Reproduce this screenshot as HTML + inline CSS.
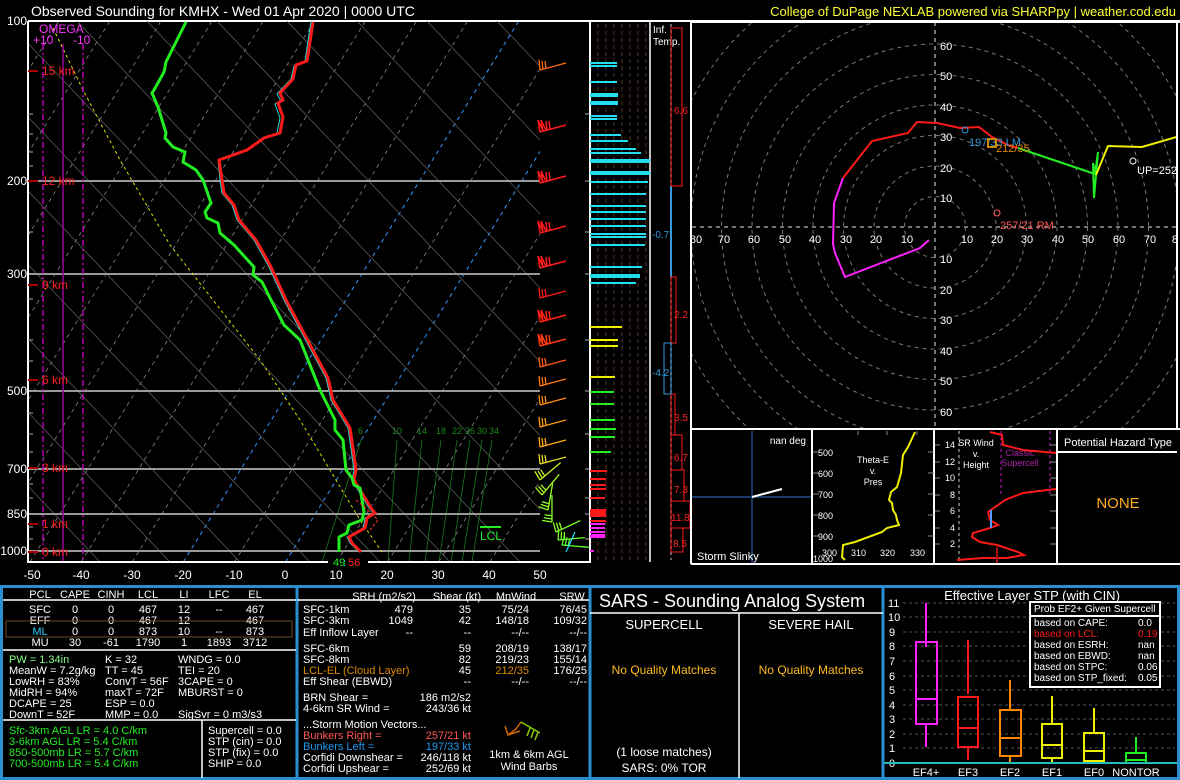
<!DOCTYPE html>
<html><head><meta charset="utf-8"><style>
html,body{margin:0;padding:0;background:#000;width:1180px;height:780px;overflow:hidden}
svg{display:block}
text{font-family:"Liberation Sans",sans-serif}
</style></head><body>
<svg width="1180" height="780" viewBox="0 0 1180 780" xmlns="http://www.w3.org/2000/svg">
<defs>
<clipPath id="sk"><rect x="28" y="21" width="512" height="541"/></clipPath>
<clipPath id="hd"><rect x="692" y="22" width="486" height="406"/></clipPath>
<g id="wb"><path d="M0 0 L26 -7 M0 0 L-2 -12 L3 -1 M3 -1 L1 -12 L6 -2 M7 -2 L6 -11 M10 -3 L9 -11" fill="none" stroke="currentColor" stroke-width="1.5"/></g>
<g id="wb2"><path d="M0 0 L26 -7 M0 0 L-1 -10 M3 -1 L2 -9 M6 -2 L5 -9" fill="none" stroke="currentColor" stroke-width="1.3"/></g>
</defs>
<rect width="1180" height="780" fill="#000"/>
<text x="31" y="16" fill="#fff" font-size="14">Observed Sounding for KMHX  -  Wed 01 Apr 2020 | 0000 UTC</text>
<text x="1176" y="16" fill="#ffff33" font-size="13" text-anchor="end">College of DuPage NEXLAB powered via SHARPpy | weather.cod.edu</text>
<line x1="28" y1="21" x2="1180" y2="21" stroke="#fff" stroke-width="2"/>

<g clip-path="url(#sk)">
<g stroke="#888" stroke-width="0.8" stroke-dasharray="4,4" fill="none">
<path d="M-276.6 562l335.4 -541M-225.5 562l335.4 -541M-174.4 562l335.4 -541M-123.3 562l335.4 -541M-72.2 562l335.4 -541M-21.1 562l335.4 -541M30 562l335.4 -541M81.1 562l335.4 -541M132.2 562l335.4 -541M234.4 562l335.4 -541M336.6 562l335.4 -541M387.7 562l335.4 -541M438.8 562l335.4 -541M489.9 562l335.4 -541M541 562l335.4 -541"/>
</g>
<path d="M183.3 562l335.4 -541M285.5 562l335.4 -541" stroke="#3399ff" stroke-width="1" stroke-dasharray="4,4" fill="none"/>
<g stroke="#666" stroke-width="0.7" fill="none">
<path d="M100 562 L-414 20M170 562 L-344 20M240 562 L-274 20M310 562 L-204 20M380 562 L-134 20M450 562 L-64 20M520 562 L6 20M590 562 L76 20M660 562 L146 20M730 562 L216 20M800 562 L286 20M870 562 L356 20M940 562 L426 20M1010 562 L496 20"/>
</g>
<g stroke="#1a7a1a" stroke-width="0.8" fill="none">
<path d="M322 562L361 440M388 562L397 440M409 562L422 440M425 562L441 440M439 562L457 440M451 562L470 440M462 562L482 440M472 562L492 440"/>
</g>
<g fill="#1a8a1a" font-size="9"><text x="358" y="434">6</text><text x="392" y="434">10</text><text x="417" y="434">14</text><text x="436" y="434">18</text><text x="452" y="434">22</text><text x="465" y="434">26</text><text x="477" y="434">30</text><text x="489" y="434">34</text></g>
<g stroke="#999" stroke-width="2"><path d="M28 181H540M28 274H540M28 391H540M28 469H540M28 514H540M28 551H540"/></g>
<polyline points="53,28 83,90 120,160 170,245 213,300 260,360 300,420 330,470 360,520 382,552" fill="none" stroke="#dddd00" stroke-width="1" stroke-dasharray="3,3"/>
<path d="M43 44V562M83 44V562" stroke="#bb00bb" stroke-width="1.5" stroke-dasharray="6,3,2,3"/>
<path d="M63 44V562" stroke="#990099" stroke-width="1.5"/>
<polyline points="311,21 305,61 294,66 291,79 277,94 281,101 275,104 280,118 277,133 261,139 245,151 218,160 220,180 222,193 232,205 237,220 254,240 269,267 284,300 326,378 331,400 348,428 354,470 352,480 358,490 369,508 373,513 365,518 363,528 347,537 350,543 359,552" fill="none" stroke="#22dddd" stroke-width="1"/>
<polyline points="313,22 307,61 296,65 293,79 280,93 283,100 278,103 283,117 280,133 264,138 247,150 219,160 222,180 224,193 234,205 239,220 256,240 271,267 286,300 328,378 333,400 350,428 356,470 354,480 360,490 371,508 375,513 367,518 365,528 349,537 352,543 361,552" fill="none" stroke="#ff1a1a" stroke-width="3"/>
<polyline points="186,22 177,40 166,62 164,72 154,90 152,93 158,107 166,133 165,138 173,147 185,152 183,162 196,170 203,180 211,203 205,212 207,218 218,223 220,233 234,245 254,267 253,275 262,282 271,300 284,325 300,340 320,390 335,420 335,430 343,440 346,470 352,478 354,485 360,488 364,512 362,520 349,525 347,533 339,537 339,552" fill="none" stroke="#22ee22" stroke-width="3"/>
<polyline points="356,500 368,510 378,520 370,530" fill="none" stroke="#ff3333" stroke-width="1" stroke-dasharray="3,2"/>
</g>
<path d="M28 21V562H590V21" fill="none" stroke="#fff" stroke-width="2"/>
<g fill="#fff" font-size="12" text-anchor="end">
<text x="27" y="25">100</text><text x="27" y="185">200</text><text x="27" y="278">300</text><text x="27" y="395">500</text><text x="27" y="473">700</text><text x="27" y="518">850</text><text x="27" y="555">1000</text>
</g>
<g fill="#fff" font-size="12" text-anchor="middle">
<text x="32" y="579">-50</text><text x="81" y="579">-40</text><text x="132" y="579">-30</text><text x="183" y="579">-20</text><text x="234" y="579">-10</text><text x="285" y="579">0</text><text x="336" y="579">10</text><text x="387" y="579">20</text><text x="438" y="579">30</text><text x="489" y="579">40</text><text x="540" y="579">50</text>
</g>
<g stroke="#aaa" stroke-width="1"><path d="M28 114h5M28 134h5M28 152h5M28 166h5M28 232h5M28 299h5M28 340h5M28 361h5M28 413h5M28 434h5M28 452h5M28 484h5M28 498h5M28 527h5M28 539h5M585 114h5M585 181h5M585 232h5M585 274h5M585 340h5M585 391h5M585 434h5M585 469h5M585 498h5M585 514h5M585 539h5"/></g>
<g fill="#ff2222" font-size="12">
<path d="M28 71h10M28 181h10M28 285h10M28 380h10M28 468h10M28 524h10M28 552h10" stroke="#aa0000" stroke-width="2"/>
<text x="42" y="75">15 km</text><text x="42" y="185">12 km</text><text x="42" y="289">9 km</text><text x="42" y="384">6 km</text><text x="42" y="472">3 km</text><text x="42" y="528">1 km</text><text x="42" y="556">0 km</text>
</g>
<text x="39" y="33" fill="#ff33ff" font-size="12">OMEGA</text>
<text x="33" y="44" fill="#ff33ff" font-size="12">+10</text><text x="73" y="44" fill="#ff33ff" font-size="12">-10</text>
<path d="M480 527h21" stroke="#22ee22" stroke-width="2"/>
<text x="480" y="540" fill="#22ee22" font-size="12">LCL</text>
<rect x="328" y="556" width="40" height="12" fill="#000"/>
<text x="333" y="566" fill="#22ee22" font-size="11">49</text><text x="343" y="566" fill="#22dddd" font-size="11">:</text><text x="348" y="566" fill="#ff2222" font-size="11">56</text>
<g>
<use href="#wb2" x="540" y="70" style="color:#ff6a10"/>
<use href="#wb" x="540" y="132" style="color:#ff1a1a"/>
<use href="#wb" x="540" y="183" style="color:#ff1a1a"/>
<use href="#wb" x="540" y="233" style="color:#ff1a1a"/>
<use href="#wb" x="540" y="268" style="color:#ff1a1a"/>
<use href="#wb2" x="540" y="298" style="color:#ff1a1a"/>
<use href="#wb" x="540" y="322" style="color:#ff2010"/>
<use href="#wb" x="540" y="346" style="color:#ff3a10"/>
<use href="#wb2" x="540" y="367" style="color:#ff5a10"/>
<use href="#wb2" x="540" y="386" style="color:#ff7a10"/>
<use href="#wb2" x="540" y="405" style="color:#ff8a10"/>
<use href="#wb2" x="540" y="427" style="color:#ff9a10"/>
<use href="#wb2" x="540" y="447" style="color:#ffaa10"/>
<use href="#wb2" x="540" y="464" style="color:#e8d820"/>
<use href="#wb2" x="540" y="480" style="color:#c8f020" transform="rotate(-25 540 480)"/>
<use href="#wb2" x="542" y="495" style="color:#aaff20" transform="rotate(-35 542 495)"/>
<use href="#wb2" x="548" y="510" style="color:#99ff20" transform="rotate(-65 548 510)"/>
<use href="#wb2" x="552" y="522" style="color:#88ff20" transform="rotate(-75 552 522)"/>
<use href="#wb2" x="556" y="532" style="color:#88ff20" transform="rotate(-10 556 532)"/>
<use href="#wb2" x="558" y="540" style="color:#77ff20" transform="rotate(10 558 540)"/>
<use href="#wb2" x="562" y="545" style="color:#66ff30" transform="rotate(20 562 545)"/>
<path d="M566 552 L575 532" stroke="#22ddff" stroke-width="1.2"/>
</g>

<g stroke="#553322" stroke-width="1" stroke-dasharray="4,3"><path d="M598 24V560M606 24V560M614 24V560M622 24V560M630 24V560M638 24V560M646 24V560"/></g>
<path d="M590 21V562M650 21V562" stroke="#fff" stroke-width="1.5"/>
<g stroke="#22ddee" stroke-width="2">
<path d="M590 63H617M590 66H617M590 82H617M590 102H618M590 104H618M590 116H617M590 119H617M590 135H621M590 141H628M590 149H636M590 153H641M590 182H648M590 194H646M590 206H646M590 212H646M590 219H646M590 226H646M590 234H646M590 237H646M590 245H645M590 267H642M590 283H636"/>
<path d="M590 95H618M590 161H650M590 173H650M590 276H640" stroke-width="4"/>
</g>
<g stroke="#eeee00" stroke-width="2"><path d="M590 327H622M590 340H618M590 346H618M590 377H615"/></g>
<g stroke="#22ee22" stroke-width="2"><path d="M590 392H614M590 404H614M590 420H615M590 429H616M590 437H615M590 452H611"/></g>
<g stroke="#ff1a1a" stroke-width="2"><path d="M590 471H607M590 479H606M590 485H606M590 489H606M590 498H605M590 521H606"/><path d="M590 513H606" stroke-width="8"/></g>
<g stroke="#ff22ff" stroke-width="2"><path d="M590 524H605M590 528H605M590 532H605M590 535H605M590 537H605M590 551H594"/></g>
<text x="653" y="33" fill="#fff" font-size="10">Inf.</text><text x="653" y="45" fill="#fff" font-size="10">Temp.</text>
<path d="M671 24V560" stroke="#888" stroke-width="1.5" stroke-dasharray="3,3"/>
<path d="M671 186V277" stroke="#3399dd" stroke-width="2"/>
<g fill="none" stroke="#ff1a1a" stroke-width="1">
<rect x="671" y="28" width="11" height="158"/><rect x="671" y="277" width="5" height="66"/><rect x="671" y="394" width="4" height="41"/><rect x="671" y="435" width="11" height="35"/><rect x="671" y="470" width="13" height="31"/><rect x="671" y="501" width="19" height="27"/><rect x="671" y="528" width="12" height="24"/>
</g>
<rect x="664" y="343" width="7" height="51" fill="none" stroke="#3399dd" stroke-width="1"/>
<g font-size="10" fill="#ff2222"><text x="674" y="114">6.6</text><text x="674" y="318">2.2</text><text x="674" y="421">3.5</text><text x="674" y="461">6.7</text><text x="674" y="493">7.3</text><text x="671" y="521">11.8</text><text x="673" y="547">8.5</text></g>
<g font-size="10" fill="#3399dd"><text x="652" y="238">-0.7</text><text x="652" y="376">-4.2</text></g>
<path d="M691 21V564" stroke="#fff" stroke-width="2"/>

<g clip-path="url(#hd)">
<g fill="none" stroke="#777" stroke-width="1" stroke-dasharray="4,4">
<circle cx="935" cy="227" r="30.5"/><circle cx="935" cy="227" r="61"/><circle cx="935" cy="227" r="91.5"/><circle cx="935" cy="227" r="122"/><circle cx="935" cy="227" r="152.5"/><circle cx="935" cy="227" r="183"/><circle cx="935" cy="227" r="213.5"/><circle cx="935" cy="227" r="244"/><circle cx="935" cy="227" r="274.5"/>
<path d="M935 22V428M692 227H1180" stroke="#999" stroke-width="1.5"/>
</g>
<g fill="#fff" font-size="11" text-anchor="middle">
<text x="967" y="243">10</text><text x="997" y="243">20</text><text x="1027" y="243">30</text><text x="1058" y="243">40</text><text x="1088" y="243">50</text><text x="1119" y="243">60</text><text x="1150" y="243">70</text><text x="1178" y="243">80</text>
<text x="907" y="243">10</text><text x="876" y="243">20</text><text x="846" y="243">30</text><text x="815" y="243">40</text><text x="785" y="243">50</text><text x="754" y="243">60</text><text x="724" y="243">70</text><text x="696" y="243">80</text>
</g>
<g fill="#fff" font-size="11">
<text x="940" y="202">10</text><text x="940" y="172">20</text><text x="940" y="141">30</text><text x="940" y="111">40</text><text x="940" y="80">50</text><text x="940" y="50">60</text>
<text x="940" y="263">10</text><text x="940" y="294">20</text><text x="940" y="324">30</text><text x="940" y="355">40</text><text x="940" y="385">50</text><text x="940" y="416">60</text>
</g>
<polyline points="929,240 920,248 845,277 835,253 833,244 834,203 843,178" fill="none" stroke="#ff22ff" stroke-width="2"/>
<polyline points="843,178 872,141 908,133 917,122 937,123 960,128 979,127 992,137 1010,146 1018,148" fill="none" stroke="#ff1a1a" stroke-width="2"/>
<polyline points="1018,148 1095,174 1098,152 1094,198 1093,163 1096,175" fill="none" stroke="#22ee22" stroke-width="2"/>
<polyline points="1096,175 1108,146 1142,147 1180,136" fill="none" stroke="#eeee00" stroke-width="2"/>
<circle cx="965" cy="130" r="3" fill="none" stroke="#3399dd"/>
<text x="969" y="146" fill="#3399dd" font-size="11">197/33 LM</text>
<rect x="988" y="139" width="8" height="8" fill="none" stroke="#cc8800" stroke-width="2"/>
<text x="996" y="152" fill="#dd8800" font-size="11">212/35</text>
<circle cx="997" cy="213" r="3" fill="none" stroke="#ff5555"/>
<text x="1000" y="229" fill="#ff5555" font-size="11">257/21 RM</text>
<circle cx="1133" cy="161" r="3" fill="none" stroke="#fff"/>
<text x="1137" y="174" fill="#fff" font-size="11">UP=252/69</text>
</g>
<path d="M691 22H1180M1177 21V430M691 429H1180" stroke="#fff" stroke-width="2" fill="none"/>

<path d="M812 430V565M934 430V565M1057 430V565M691 564H1180" stroke="#fff" stroke-width="2"/>
<path d="M752 431V563M692 497H811" stroke="#1a3a6a" stroke-width="2"/>
<path d="M752 497L782 489" stroke="#fff" stroke-width="2"/>
<text x="806" y="444" fill="#fff" font-size="10" text-anchor="end">nan deg</text>
<text x="697" y="560" fill="#fff" font-size="11">Storm Slinky</text>
<g stroke="#888" stroke-width="1"><path d="M813 452h6M813 473h6M813 494h6M813 515h6M813 536h6M928 452h6M928 473h6M928 494h6M928 515h6M928 536h6M858 431v4M887 431v4M917 431v4"/></g>
<g fill="#fff" font-size="9"><text x="818" y="456">500</text><text x="818" y="477">600</text><text x="818" y="498">700</text><text x="818" y="519">800</text><text x="818" y="540">900</text><text x="813" y="562">1000</text>
<text x="822" y="556">300</text><text x="851" y="556">310</text><text x="880" y="556">320</text><text x="910" y="556">330</text></g>
<g fill="#fff" font-size="9" text-anchor="middle"><text x="873" y="463">Theta-E</text><text x="873" y="474">v.</text><text x="873" y="485">Pres</text></g>
<polyline points="915,432 908,447 903,455 901,473 897,487 891,492 889,500 892,503 893,510 896,515 897,520 899,525 887,528 882,532 855,542 843,545 842,557 845,560" fill="none" stroke="#eeee00" stroke-width="2"/>
<path d="M959 431V563" stroke="#888" stroke-dasharray="3,3" stroke-width="1.5"/>
<path d="M1001 431V495M1050 431V495" stroke="#881188" stroke-dasharray="3,3" stroke-width="1.5"/>
<g fill="#fff" font-size="9" text-anchor="end"><text x="955" y="448">14</text><text x="955" y="465">12</text><text x="955" y="481">10</text><text x="955" y="498">8</text><text x="955" y="514">6</text><text x="955" y="531">4</text><text x="955" y="547">2</text></g>
<g stroke="#888"><path d="M935 445h5M935 462h5M935 478h5M935 495h5M935 511h5M935 528h5M935 544h5M1050 445h6M1050 462h6M1050 478h6M1050 495h6M1050 511h6M1050 528h6M1050 544h6"/></g>
<g fill="#fff" font-size="9" text-anchor="middle"><text x="976" y="446">SR Wind</text><text x="976" y="457">v.</text><text x="976" y="468">Height</text></g>
<g fill="#aa22aa" font-size="9" text-anchor="middle"><text x="1020" y="456">Classic</text><text x="1020" y="466">Supercell</text></g>
<polyline points="990,432 1002,435 1003,445 1023,450 1056,453" fill="none" stroke="#ff1a1a" stroke-width="2"/>
<polyline points="1056,489 1023,493 1005,500 1001,503 988,512 990,520 998,525 990,528 973,533 972,537 980,542 997,545 1018,552 1024,555 1007,558 983,558 957,560" fill="none" stroke="#ff1a1a" stroke-width="2"/>
<path d="M997 547V563" stroke="#aa1111" stroke-width="2"/>
<path d="M991 510V528" stroke="#5599ff" stroke-width="2"/>
<path d="M1057 452H1177" stroke="#fff" stroke-width="2"/>
<text x="1118" y="446" fill="#fff" font-size="11" text-anchor="middle">Potential Hazard Type</text>
<text x="1118" y="508" fill="#ffaa22" font-size="15" text-anchor="middle">NONE</text>

<rect x="1.5" y="586.5" width="1177" height="192" fill="none" stroke="#2a8fd0" stroke-width="3"/>
<path d="M297 586V779M590 586V779M883 586V779" stroke="#2a8fd0" stroke-width="3"/>
<path d="M3 600H296M3 650H296M3 720H296M202 720V778M297 600H589M590 613H883M739 613V778" stroke="#fff" stroke-width="1.5"/>
<g fill="#fff" font-size="11" text-anchor="middle">
<text x="40" y="598">PCL</text><text x="75" y="598">CAPE</text><text x="111" y="598">CINH</text><text x="148" y="598">LCL</text><text x="184" y="598">LI</text><text x="219" y="598">LFC</text><text x="255" y="598">EL</text>
<text x="40" y="613">SFC</text><text x="75" y="613">0</text><text x="111" y="613">0</text><text x="148" y="613">467</text><text x="184" y="613">12</text><text x="219" y="613">--</text><text x="255" y="613">467</text>
<text x="40" y="624">EFF</text><text x="75" y="624">0</text><text x="111" y="624">0</text><text x="148" y="624">467</text><text x="184" y="624">12</text><text x="219" y="624">--</text><text x="255" y="624">467</text>
<text x="40" y="635" fill="#22ccff">ML</text><text x="75" y="635">0</text><text x="111" y="635">0</text><text x="148" y="635">873</text><text x="184" y="635">10</text><text x="219" y="635">--</text><text x="255" y="635">873</text>
<text x="40" y="646">MU</text><text x="75" y="646">30</text><text x="111" y="646">-61</text><text x="148" y="646">1790</text><text x="184" y="646">1</text><text x="219" y="646">1893</text><text x="255" y="646">3712</text>
</g>
<rect x="6" y="621" width="286" height="16" fill="none" stroke="#6a4a2a" stroke-width="1"/>
<g fill="#fff" font-size="11">
<text x="9" y="663" fill="#88ff88">PW = 1.34in</text><text x="105" y="663">K = 32</text><text x="178" y="663">WNDG = 0.0</text>
<text x="9" y="674">MeanW = 7.2g/kg</text><text x="105" y="674">TT = 45</text><text x="178" y="674">TEI = 20</text>
<text x="9" y="685">LowRH = 83%</text><text x="105" y="685">ConvT = 56F</text><text x="178" y="685">3CAPE = 0</text>
<text x="9" y="696">MidRH = 94%</text><text x="105" y="696">maxT = 72F</text><text x="178" y="696">MBURST = 0</text>
<text x="9" y="707">DCAPE = 25</text><text x="105" y="707">ESP = 0.0</text>
<text x="9" y="718">DownT = 52F</text><text x="105" y="718">MMP = 0.0</text><text x="178" y="718">SigSvr = 0 m3/s3</text>
<text x="208" y="734">Supercell = 0.0</text><text x="208" y="745">STP (cin) = 0.0</text><text x="208" y="756">STP (fix) = 0.0</text><text x="208" y="767">SHIP = 0.0</text>
</g>
<g fill="#22ee22" font-size="11"><text x="9" y="734">Sfc-3km AGL LR = 4.0 C/km</text><text x="9" y="745">3-6km AGL LR = 5.4 C/km</text><text x="9" y="756">850-500mb LR = 5.7 C/km</text><text x="9" y="767">700-500mb LR = 5.4 C/km</text></g>
<g fill="#fff" font-size="11">
<text x="384" y="600" text-anchor="middle">SRH (m2/s2)</text><text x="457" y="600" text-anchor="middle">Shear (kt)</text><text x="516" y="600" text-anchor="middle">MnWind</text><text x="572" y="600" text-anchor="middle">SRW</text>
<text x="303" y="613">SFC-1km</text><text x="303" y="624">SFC-3km</text><text x="303" y="636">Eff Inflow Layer</text>
<text x="303" y="652">SFC-6km</text><text x="303" y="663">SFC-8km</text><text x="303" y="674" fill="#dd8800">LCL-EL (Cloud Layer)</text><text x="303" y="685">Eff Shear (EBWD)</text>
<text x="303" y="701">BRN Shear =</text><text x="303" y="712">4-6km SR Wind =</text>
<text x="303" y="728">...Storm Motion Vectors...</text>
<text x="303" y="739" fill="#ff5555">Bunkers Right =</text><text x="303" y="750" fill="#2299ee">Bunkers Left =</text>
<text x="303" y="761">Corfidi Downshear =</text><text x="303" y="772">Corfidi Upshear =</text>
</g>
<g fill="#fff" font-size="11" text-anchor="end">
<text x="413" y="613">479</text><text x="471" y="613">35</text><text x="529" y="613">75/24</text><text x="587" y="613">76/45</text>
<text x="413" y="624">1049</text><text x="471" y="624">42</text><text x="529" y="624">148/18</text><text x="587" y="624">109/32</text>
<text x="413" y="636">--</text><text x="471" y="636">--</text><text x="529" y="636">--/--</text><text x="587" y="636">--/--</text>
<text x="471" y="652">59</text><text x="529" y="652">208/19</text><text x="587" y="652">138/17</text>
<text x="471" y="663">82</text><text x="529" y="663">219/23</text><text x="587" y="663">155/14</text>
<text x="471" y="674">45</text><text x="529" y="674" fill="#dd8800">212/35</text><text x="587" y="674">176/25</text>
<text x="471" y="685">--</text><text x="529" y="685">--/--</text><text x="587" y="685">--/--</text>
<text x="471" y="701">186 m2/s2</text><text x="471" y="712">243/36 kt</text>
<text x="471" y="739" fill="#ff5555">257/21 kt</text><text x="471" y="750" fill="#2299ee">197/33 kt</text>
<text x="471" y="761">246/118 kt</text><text x="471" y="772">252/69 kt</text>
</g>
<path d="M505 726L508 735L516 729L521 722 M508 735 L520 731" stroke="#cc6600" stroke-width="1.5" fill="none"/>
<path d="M521 722L540 733M530 728l-3 8M534 730l-3 8M538 732l-3 8" stroke="#88cc00" stroke-width="1.5" fill="none"/>
<text x="529" y="758" fill="#fff" font-size="11" text-anchor="middle">1km &amp; 6km AGL</text>
<text x="529" y="770" fill="#fff" font-size="11" text-anchor="middle">Wind Barbs</text>
<text x="599" y="607" fill="#fff" font-size="18">SARS - Sounding Analog System</text>
<g font-size="13" text-anchor="middle">
<text x="664" y="629" fill="#fff">SUPERCELL</text><text x="811" y="629" fill="#fff">SEVERE HAIL</text>
<text x="664" y="674" fill="#ffbb22" font-size="12">No Quality Matches</text><text x="811" y="674" fill="#ffbb22" font-size="12">No Quality Matches</text>
<text x="664" y="756" fill="#fff" font-size="12">(1 loose matches)</text><text x="664" y="772" fill="#fff" font-size="12">SARS: 0% TOR</text>
</g>
<text x="1032" y="600" fill="#fff" font-size="13" text-anchor="middle">Effective Layer STP (with CIN)</text>
<g stroke="#555" stroke-dasharray="3,3" stroke-width="1"><path d="M903 603H1175M903 617H1175M903 632H1175M903 646H1175M903 661H1175M903 676H1175M903 690H1175M903 705H1175M903 719H1175M903 734H1175M903 748H1175"/></g>
<g fill="#fff" font-size="11"><text x="888" y="607">11</text><text x="888" y="621">10</text><text x="889" y="636">9</text><text x="889" y="650">8</text><text x="889" y="665">7</text><text x="889" y="680">6</text><text x="889" y="694">5</text><text x="889" y="709">4</text><text x="889" y="723">3</text><text x="889" y="738">2</text><text x="889" y="752">1</text><text x="889" y="767">0</text></g>
<g fill="none" stroke-width="2">
<g stroke="#ff22ff"><path d="M926 603V647M926 724V747M916 699H937"/><rect x="916" y="642" width="21" height="82"/></g>
<g stroke="#ff1a1a"><path d="M968 640V694M968 748V760M958 728H978"/><rect x="958" y="697" width="20" height="50"/></g>
<g stroke="#ff8800"><path d="M1010 680V710M1010 755V763M1000 738H1021"/><rect x="1000" y="710" width="21" height="46"/></g>
<g stroke="#eeee00"><path d="M1052 696V724M1052 758V763M1042 745H1062"/><rect x="1042" y="724" width="20" height="34"/></g>
<g stroke="#eeee00"><path d="M1094 708V733M1094 761V763M1084 751H1104"/><rect x="1084" y="733" width="20" height="28"/></g>
<g stroke="#22ee22"><path d="M1136 737V753M1126 760H1146"/><rect x="1126" y="753" width="20" height="10"/></g>
</g>
<path d="M884 763H1177" stroke="#22bbbb" stroke-width="2"/>
<g fill="#fff" font-size="11" text-anchor="middle"><text x="926" y="776">EF4+</text><text x="968" y="776">EF3</text><text x="1010" y="776">EF2</text><text x="1052" y="776">EF1</text><text x="1094" y="776">EF0</text><text x="1136" y="776">NONTOR</text></g>
<rect x="1030" y="602" width="130" height="85" fill="#000" stroke="#fff" stroke-width="2"/>
<path d="M1030 616H1160" stroke="#fff" stroke-width="2"/>
<g fill="#fff" font-size="10">
<text x="1034" y="612">Prob EF2+ Given Supercell</text>
<text x="1034" y="626">based on CAPE:</text><text x="1138" y="626">0.0</text>
<text x="1034" y="637" fill="#ff1a1a">based on LCL:</text><text x="1138" y="637" fill="#ff1a1a">0.19</text>
<text x="1034" y="648">based on ESRH:</text><text x="1138" y="648">nan</text>
<text x="1034" y="659">based on EBWD:</text><text x="1138" y="659">nan</text>
<text x="1034" y="670">based on STPC:</text><text x="1138" y="670">0.06</text>
<text x="1034" y="681">based on STP_fixed:</text><text x="1138" y="681">0.05</text>
</g>
</svg>
</body></html>
